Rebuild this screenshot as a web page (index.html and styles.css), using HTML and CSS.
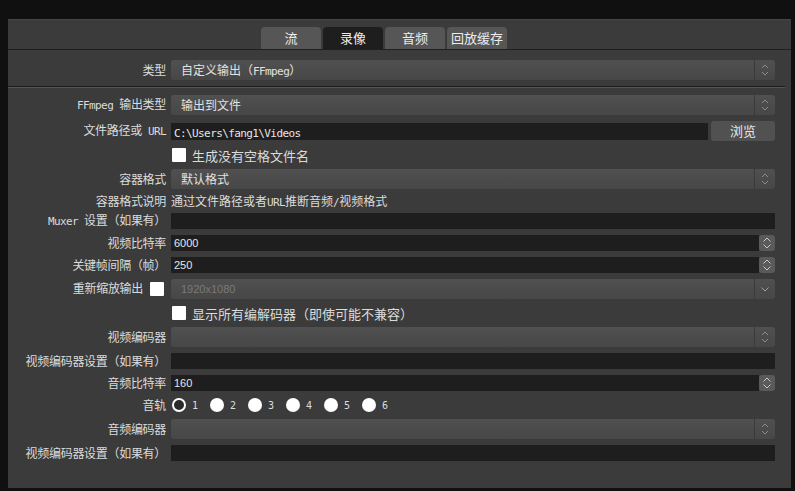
FILE: index.html
```html
<!DOCTYPE html>
<html>
<head>
    <title>输出设置</title>
    <link rel="stylesheet" href="styles.css">
</head>
<body>
    <div class="window">
        <div class="tabbar">
            <span class="tab">流</span>
            <span class="tab active">录像</span>
            <span class="tab">音频</span>
            <span class="tab">回放缓存</span>
        </div>

        <div class="form first">
            <div class="lbl">类型</div>
            <div class="combo">
                <span class="val">自定义输出（<span class="lat">FFmpeg</span>）</span>
                <span class="arrows">
                    <svg width="8" height="14" viewBox="0 0 8 14"><path d="M1 5 L4 2 L7 5 M1 9 L4 12 L7 9" fill="none" stroke="#8c8c8c" stroke-width="1"/></svg>
                </span>
            </div>
        </div>

        <div class="sep"></div>

        <div class="form">
            <div class="lbl"><span class="lat">FFmpeg&nbsp;</span>输出类型</div>
            <div class="combo">
                <span class="val">输出到文件</span>
                <span class="arrows">
                    <svg width="8" height="14" viewBox="0 0 8 14"><path d="M1 5 L4 2 L7 5 M1 9 L4 12 L7 9" fill="none" stroke="#8c8c8c" stroke-width="1"/></svg>
                </span>
            </div>

            <div class="lbl">文件路径或<span class="lat">&nbsp;URL</span></div>
            <div class="pathrow">
                <div class="input path"><span class="lat">C:\Users\fang1\Videos</span></div>
                <div class="button">浏览</div>
            </div>

            <div class="lbl"></div>
            <div class="check"><span class="box"></span>生成没有空格文件名</div>

            <div class="lbl">容器格式</div>
            <div class="combo">
                <span class="val">默认格式</span>
                <span class="arrows">
                    <svg width="8" height="14" viewBox="0 0 8 14"><path d="M1 5 L4 2 L7 5 M1 9 L4 12 L7 9" fill="none" stroke="#8c8c8c" stroke-width="1"/></svg>
                </span>
            </div>

            <div class="lbl">容器格式说明</div>
            <div class="note">通过文件路径或者<span class="lat">URL</span>推断音频<span class="lat">/</span>视频格式</div>

            <div class="lbl"><span class="lat">Muxer&nbsp;</span>设置（如果有）</div>
            <div class="input"></div>

            <div class="lbl">视频比特率</div>
            <div class="spin">
                <div class="input num">6000</div>
                <span class="spinbtn">
                    <svg width="10" height="14" viewBox="0 0 10 14"><path d="M1.5 5.5 L5 2 L8.5 5.5 M1.5 8.5 L5 12 L8.5 8.5" fill="none" stroke="#c8c8c8" stroke-width="1"/></svg>
                </span>
            </div>

            <div class="lbl">关键帧间隔（帧）</div>
            <div class="spin">
                <div class="input num">250</div>
                <span class="spinbtn">
                    <svg width="10" height="14" viewBox="0 0 10 14"><path d="M1.5 5.5 L5 2 L8.5 5.5 M1.5 8.5 L5 12 L8.5 8.5" fill="none" stroke="#c8c8c8" stroke-width="1"/></svg>
                </span>
            </div>

            <div class="lbl">重新缩放输出<span class="box inline"></span></div>
            <div class="combo disabled">
                <span class="val num">1920x1080</span>
                <span class="arrows">
                    <svg width="10" height="8" viewBox="0 0 10 8"><path d="M1.5 2.5 L5 6 L8.5 2.5" fill="none" stroke="#a0a0a0" stroke-width="1"/></svg>
                </span>
            </div>

            <div class="lbl"></div>
            <div class="check"><span class="box"></span>显示所有编解码器（即使可能不兼容）</div>

            <div class="lbl">视频编码器</div>
            <div class="combo">
                <span class="val"></span>
                <span class="arrows">
                    <svg width="8" height="14" viewBox="0 0 8 14"><path d="M1 5 L4 2 L7 5 M1 9 L4 12 L7 9" fill="none" stroke="#8c8c8c" stroke-width="1"/></svg>
                </span>
            </div>

            <div class="lbl">视频编码器设置（如果有）</div>
            <div class="input"></div>

            <div class="lbl">音频比特率</div>
            <div class="spin">
                <div class="input num">160</div>
                <span class="spinbtn">
                    <svg width="10" height="14" viewBox="0 0 10 14"><path d="M1.5 5.5 L5 2 L8.5 5.5 M1.5 8.5 L5 12 L8.5 8.5" fill="none" stroke="#c8c8c8" stroke-width="1"/></svg>
                </span>
            </div>

            <div class="lbl">音轨</div>
            <div class="radios">
                <span class="radio"><span class="dot on"></span>1</span>
                <span class="radio"><span class="dot"></span>2</span>
                <span class="radio"><span class="dot"></span>3</span>
                <span class="radio"><span class="dot"></span>4</span>
                <span class="radio"><span class="dot"></span>5</span>
                <span class="radio"><span class="dot"></span>6</span>
            </div>

            <div class="lbl">音频编码器</div>
            <div class="combo">
                <span class="val"></span>
                <span class="arrows">
                    <svg width="8" height="14" viewBox="0 0 8 14"><path d="M1 5 L4 2 L7 5 M1 9 L4 12 L7 9" fill="none" stroke="#8c8c8c" stroke-width="1"/></svg>
                </span>
            </div>

            <div class="lbl">视频编码器设置（如果有）</div>
            <div class="input"></div>
        </div>
    </div>
</body>
</html>
```

FILE: styles.css
```css
body
{
    margin: 0;
    background-color: #101010;
    font-family: "Noto Sans CJK SC", sans-serif;
    font-size: 12px;
    color: #dcdcdc;
}
.window
{
    margin: 19px 0 0 8px;
    width: 783px;
    height: 469px;
    background-color: #3b3b3b;
    border-top: 1px solid #464646;
    box-sizing: border-box;
}
.lat
{
    font-family: "DejaVu Sans Mono", monospace;
    font-size: 11px;
    letter-spacing: -0.6px;
}
.num
{
    font-family: "Liberation Sans", sans-serif;
    font-size: 11px;
}
.tabbar
{
    display: flex;
    gap: 2px;
    padding: 7px 0 0 253px;
    border-bottom: 1px solid #1f1f1f;
}
.tab
{
    width: 60px;
    height: 22px;
    line-height: 22px;
    text-align: center;
    background-color: #565656;
    border-radius: 4px 4px 0 0;
    color: #ececec;
    font-size: 13px;
}
.tab.active
{
    background-color: #1e1e1e;
}
.form
{
    display: grid;
    grid-template-columns: 158px 1fr;
    column-gap: 5px;
    row-gap: 6px;
    align-items: center;
    padding: 7px 16px 0 0;
}
.form.first
{
    padding-top: 10px;
}
.lbl
{
    text-align: right;
    white-space: nowrap;
    line-height: 12px;
    letter-spacing: -0.3px;
}
.sep
{
    margin: 6px 6px 0 0;
    height: 1px;
    background-color: #1c1c1c;
    border-bottom: 1px solid #555555;
}
.combo
{
    display: flex;
    height: 20px;
    border-radius: 3px;
    background: linear-gradient(#505050, #474747);
    overflow: hidden;
}
.combo .val
{
    flex: 1;
    padding-left: 10px;
    line-height: 20px;
    color: #e2e2e2;
}
.combo .arrows
{
    width: 20px;
    display: flex;
    align-items: center;
    justify-content: center;
    border-left: 1px solid #3a3a3a;
}
.combo.disabled .val
{
    color: #7a7a7a;
}
.input
{
    height: 16px;
    line-height: 16px;
    background-color: #1e1e1e;
    padding-left: 3px;
    color: #e6e6e6;
}
.pathrow
{
    display: flex;
    align-items: center;
    gap: 3px;
}
.input.path
{
    flex: 1;
    height: 17px;
    line-height: 17px;
}
.button
{
    width: 64px;
    height: 20px;
    line-height: 20px;
    text-align: center;
    background-color: #515151;
    border-radius: 3px;
    font-size: 13px;
    color: #e8e8e8;
}
.check
{
    display: flex;
    align-items: center;
    gap: 6px;
    height: 16px;
    font-size: 13px;
    padding-left: 1px;
}
.box
{
    width: 14px;
    height: 14px;
    background-color: #ffffff;
    border-radius: 1px;
    flex: none;
}
.box.inline
{
    display: inline-block;
    vertical-align: middle;
    margin: -2px 2px 0 7px;
}
.note
{
    line-height: 12px;
    height: 12px;
}
.spin
{
    display: flex;
    align-items: center;
}
.spin .input
{
    flex: 1;
}
.spinbtn
{
    width: 16px;
    height: 16px;
    background-color: #5a5a5a;
    border-radius: 3px;
    display: flex;
    align-items: center;
    justify-content: center;
}
.radios
{
    display: flex;
    height: 16px;
    align-items: center;
    padding-left: 1px;
}
.radio
{
    display: flex;
    align-items: center;
    gap: 6px;
    width: 38px;
    font-family: "DejaVu Sans Mono", monospace;
    font-size: 10px;
}
.dot
{
    width: 14px;
    height: 14px;
    border-radius: 50%;
    background-color: #ffffff;
    box-sizing: border-box;
}
.dot.on
{
    background-color: #2a2a2a;
    border: 2px solid #ffffff;
}
```
